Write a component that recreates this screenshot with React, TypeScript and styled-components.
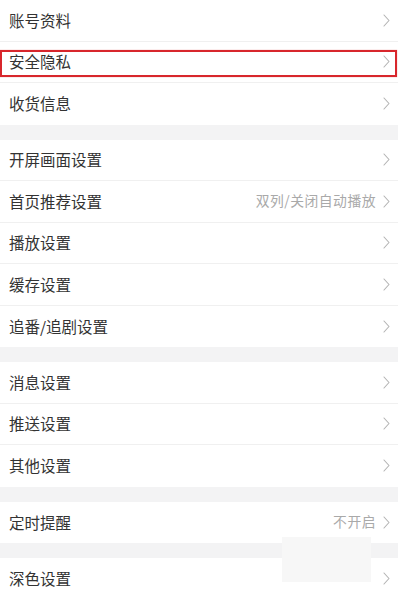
import React from "react";
import styled, { createGlobalStyle } from "styled-components";

const Global = createGlobalStyle`
  html, body { margin: 0; padding: 0; background: #f3f3f4; }
  body { font-family: "Noto Sans CJK SC", "Noto Sans", sans-serif; }
  * { box-sizing: border-box; }
`;

const Page = styled.div`
  position: relative;
  width: 398px;
  height: 592px;
  overflow: hidden;
  background: #f3f3f4;
  display: flex;
  flex-direction: column;
  gap: 15px;
`;

const Group = styled.div`
  background: #ffffff;
  display: flex;
  flex-direction: column;
`;

const Row = styled.div`
  height: 41.5px;
  flex: none;
  display: flex;
  align-items: center;
  padding: 0 8px 0 9px;
  border-bottom: 1px solid #f0f0f0;
  &:last-child { border-bottom: none; }
`;

const Label = styled.span`
  flex: 1;
  font-size: 15.5px;
  color: #333333;
  line-height: 1;
`;

const Value = styled.span`
  font-size: 13.8px;
  letter-spacing: 0.5px;
  color: #a9a9a9;
  margin-right: 7px;
  line-height: 1;
`;

const Highlight = styled.div`
  position: absolute;
  left: 0;
  top: 50px;
  width: 397px;
  height: 27px;
  border: 2px solid #d8262c;
  box-shadow: 0 0 1px rgba(216, 38, 44, 0.5);
  pointer-events: none;
`;

const Smudge = styled.div`
  position: absolute;
  left: 282px;
  top: 537px;
  width: 89px;
  height: 45px;
  background: #f7f7f7;
`;

const Chevron = () => (
  <svg width="7" height="13" viewBox="0 0 7 13" fill="none">
    <polyline points="1,1 6,6.5 1,12" stroke="#b3b3b3" strokeWidth="1.1" strokeLinecap="round" strokeLinejoin="round" />
  </svg>
);

type Item = { label: string; value?: string };

const groups: Item[][] = [
  [{ label: "账号资料" }, { label: "安全隐私" }, { label: "收货信息" }],
  [
    { label: "开屏画面设置" },
    { label: "首页推荐设置", value: "双列/关闭自动播放" },
    { label: "播放设置" },
    { label: "缓存设置" },
    { label: "追番/追剧设置" },
  ],
  [{ label: "消息设置" }, { label: "推送设置" }, { label: "其他设置" }],
  [{ label: "定时提醒", value: "不开启" }],
  [{ label: "深色设置" }],
];

export default function App() {
  return (
    <>
      <Global />
      <Page>
        {groups.map((g, gi) => (
          <Group key={gi}>
            {g.map((it) => (
              <Row key={it.label}>
                <Label>{it.label}</Label>
                {it.value && <Value>{it.value}</Value>}
                <Chevron />
              </Row>
            ))}
          </Group>
        ))}
        <Highlight />
        <Smudge />
      </Page>
    </>
  );
}
